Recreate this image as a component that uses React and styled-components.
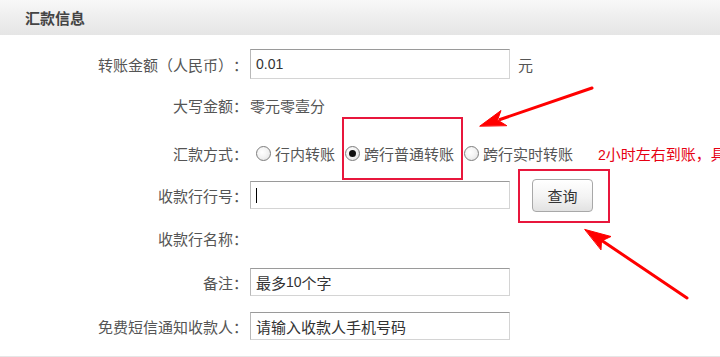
import React from 'react'
import styled, { createGlobalStyle } from 'styled-components'

const GlobalStyle = createGlobalStyle`
  html, body {
    margin: 0;
    padding: 0;
    background: #fff;
    overflow: hidden;
  }
  body {
    font-family: "Noto Sans CJK SC", "Liberation Sans", sans-serif;
    color: #555;
    text-spacing-trim: space-all;
  }
`

const Page = styled.div`
  position: relative;
  width: 720px;
  height: 357px;
  box-sizing: border-box;
  border-bottom: 1px solid #e6e6e6;
  overflow: hidden;
`

const Header = styled.div`
  height: 35px;
  display: flex;
  align-items: center;
  padding-left: 25px;
  background: linear-gradient(to bottom, #f8f8f8 0%, #ececec 60%, #e5e5e5 100%);
  font-size: 15px;
  font-weight: bold;
  color: #444;
`

const Form = styled.div`
  display: flex;
  flex-direction: column;
`

const Row = styled.div`
  display: flex;
  align-items: center;
  height: 30px;
  margin-top: ${p => p.$top}px;
  white-space: nowrap;
`

const Label = styled.div`
  flex: none;
  width: 248px;
  text-align: right;
  font-size: 15px;
  color: #555;
`

const Body = styled.div`
  display: flex;
  align-items: center;
  margin-left: 2px;
  font-size: 15px;
  color: #555;
`

const Field = styled.div`
  box-sizing: border-box;
  width: 260px;
  height: ${p => p.$h}px;
  display: flex;
  align-items: center;
  padding-left: 5px;
  border: 1px solid #d4d4d4;
  border-top-color: #9a9a9a;
  border-left-color: #b8b8b8;
  background: #fff;
  font-size: 15px;
  color: #333;
`

const Num = styled.span`
  font-family: "Liberation Sans", sans-serif;
  font-size: 14px;
`

const Caret = styled.span`
  display: inline-block;
  width: 1px;
  height: 15px;
  background: #000;
`

const Unit = styled.span`
  margin-left: 8px;
`

const Options = styled.div`
  display: flex;
  align-items: center;
  padding-left: 4px;
`

const Option = styled.label`
  display: flex;
  align-items: center;
  margin-right: ${p => p.$gap}px;
`

const Radio = styled.span`
  box-sizing: border-box;
  width: 15px;
  height: 15px;
  margin-left: 2px;
  margin-right: 4px;
  border-radius: 50%;
  border: 1px solid #7d7d7d;
  background: radial-gradient(circle at 40% 40%, #fff 0%, #f2f2f2 50%, #dcdcdc 100%);
  display: flex;
  align-items: center;
  justify-content: center;

  &::after {
    content: '';
    width: 7px;
    height: 7px;
    border-radius: 50%;
    background: ${p => (p.$checked ? '#111' : 'transparent')};
  }
`

const Note = styled.span`
  color: #e60012;
`

const QueryButton = styled.button`
  box-sizing: border-box;
  margin-left: 22px;
  width: 61px;
  height: 33px;
  border: 1px solid #a8a8a8;
  border-radius: 4px;
  background: linear-gradient(to bottom, #ffffff 0%, #f3f3f3 55%, #e2e2e2 100%);
  box-shadow: inset 0 1px 0 #fff;
  font-family: "Noto Sans CJK SC", sans-serif;
  font-size: 15px;
  color: #333;
  padding: 0;
`

const Highlight = styled.div`
  position: absolute;
  box-sizing: border-box;
  border: 2px solid #e8173c;
  pointer-events: none;
`

const Arrows = styled.svg`
  position: absolute;
  left: 0;
  top: 0;
  pointer-events: none;
`

export default function App () {
  return (
    <Page>
      <GlobalStyle />
      <Header>汇款信息</Header>
      <Form>
        <Row $top={14}>
          <Label>转账金额（人民币）：</Label>
          <Body>
            <Field $h={30}><Num>0.01</Num></Field>
            <Unit>元</Unit>
          </Body>
        </Row>
        <Row $top={11}>
          <Label>大写金额：</Label>
          <Body>零元零壹分</Body>
        </Row>
        <Row $top={18}>
          <Label>汇款方式：</Label>
          <Body>
            <Options>
              <Option $gap={8}><Radio />行内转账</Option>
              <Option $gap={8}><Radio $checked />跨行普通转账</Option>
              <Option $gap={25}><Radio />跨行实时转账</Option>
              <Note><Num>2</Num>小时左右到账，具体以收款行为准</Note>
            </Options>
          </Body>
        </Row>
        <Row $top={12}>
          <Label>收款行行号：</Label>
          <Body>
            <Field $h={28}><Caret /></Field>
            <QueryButton>查询</QueryButton>
          </Body>
        </Row>
        <Row $top={13}>
          <Label>收款行名称：</Label>
        </Row>
        <Row $top={14}>
          <Label>备注：</Label>
          <Body>
            <Field $h={28}>最多<Num>10</Num>个字</Field>
          </Body>
        </Row>
        <Row $top={14}>
          <Label>免费短信通知收款人：</Label>
          <Body>
            <Field $h={28}>请输入收款人手机号码</Field>
          </Body>
        </Row>
      </Form>

      <Highlight style={{ left: 342, top: 117, width: 121, height: 63 }} />
      <Highlight style={{ left: 518, top: 169, width: 92, height: 54 }} />

      <Arrows width="720" height="357" viewBox="0 0 720 357">
        <g fill="#ff0000" stroke="#ff0000" strokeLinecap="round">
          <line x1="592" y1="88" x2="500" y2="119.5" strokeWidth="3" />
          <path d="M480 126 L501 110.5 L497.5 120 L506.5 125.5 Z" strokeWidth="1" strokeLinejoin="round" />
          <line x1="687" y1="298" x2="601" y2="240" strokeWidth="3" />
          <path d="M585 229.5 L611 236.5 L601.5 241 L601 249.5 Z" strokeWidth="1" strokeLinejoin="round" />
        </g>
      </Arrows>
    </Page>
  )
}
